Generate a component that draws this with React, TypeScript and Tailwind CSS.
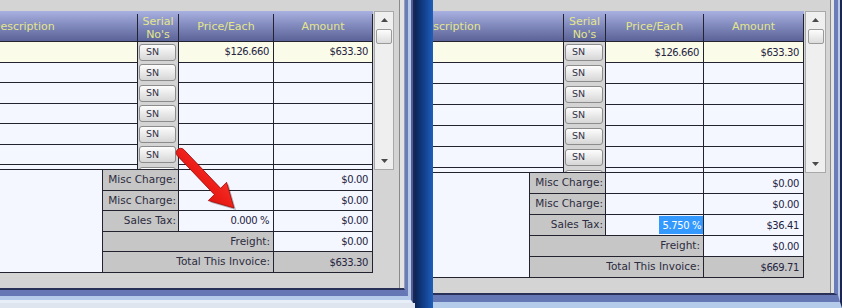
type Cfg = {
  box: string;
  desc: string;
  descShift: string;
  serial: string;
  btn: string;
  price: string;
  amount: string;
  row: string;
  totRow: string;
  blank: string;
  label: string;
  wide: string;
  scroll: string;
  taxAmt: string;
  total: string;
  tax: string;
  highlight: boolean;
};

const line = "border-[#23232f]";
const num = "text-[10px] tracking-[-0.4px] text-[#24243f]";

function SN({ cls, text = true }: { cls: string; text?: boolean }) {
  return (
    <div
      className={`${cls} ml-[1px] flex h-[17px] shrink-0 items-center rounded-[3px] border border-[#8c8c8c] bg-gradient-to-b from-[#fdfdfd] to-[#d6d6d6] pl-[6px] text-[9.5px] text-[#34344a]`}
    >
      {text ? "SN" : ""}
    </div>
  );
}

function ScrollBar({ cls }: { cls: string }) {
  return (
    <div className={`${cls} ml-[1px] flex flex-col items-center border border-[#a9a9a9] bg-[#efefef]`}>
      <svg width="7" height="4" className="mt-[6px]">
        <path d="M0 4 L3.5 0 L7 4Z" fill="#4a4a4a" />
      </svg>
      <div className="mt-[7px] h-[15px] w-[16px] rounded-[2px] border border-[#9a9a9a] bg-gradient-to-b from-[#fdfdfd] to-[#dcdcdc]" />
      <div className="flex-1" />
      <svg width="7" height="4" className="mb-[6px]">
        <path d="M0 0 L3.5 4 L7 0Z" fill="#4a4a4a" />
      </svg>
    </div>
  );
}

function Panel({ c }: { c: Cfg }) {
  const rows = [0, 1, 2, 3, 4, 5];
  return (
    <div className={`${c.box} flex flex-col overflow-hidden bg-[#d4d4d4] font-['DejaVu_Sans',sans-serif]`}>
      <div className="h-[11px] shrink-0" />
      <div className="flex items-start">
        <div className="flex flex-col">
          <div className={`flex h-[31px] border-b ${line} bg-gradient-to-b from-[#a9b1e1] to-[#5a6297] pt-[3px] text-[11px] text-[#e4e68c]`}>
            <div className={`${c.desc} flex items-center overflow-hidden border-r ${line}`}>
              <span className={`${c.descShift} whitespace-nowrap`}>Description</span>
            </div>
            <div className={`${c.serial} flex flex-col items-center justify-center border-r ${line} leading-[13px]`}>
              <span>Serial</span>
              <span>No's</span>
            </div>
            <div className={`${c.price} flex items-center justify-center border-r ${line}`}>Price/Each</div>
            <div className={`${c.amount} flex items-center justify-center border-r ${line}`}>Amount</div>
          </div>

          {rows.map((i) => {
            const bg = i === 0 ? "bg-[#fbfbea]" : "bg-[#f4f7ff]";
            return (
              <div key={i} className={`${c.row} flex`}>
                <div className={`${c.desc} border-r border-b ${line} ${bg}`} />
                <div className={`${c.serial} flex items-center border-r ${line}`}>
                  <SN cls={c.btn} />
                </div>
                <div className={`${c.price} flex items-center justify-end border-r border-b ${line} ${bg} pr-[4px] ${num}`}>
                  {i === 0 ? "$126.660" : ""}
                </div>
                <div className={`${c.amount} flex items-center justify-end border-r border-b ${line} ${bg} pr-[4px] ${num}`}>
                  {i === 0 ? "$633.30" : ""}
                </div>
              </div>
            );
          })}

          <div className="flex h-[5px]">
            <div className={`${c.desc} border-r border-b ${line} bg-[#f4f7ff]`} />
            <div className={`${c.serial} overflow-hidden border-r border-b ${line} pt-[2px]`}>
              <SN cls={c.btn} text={false} />
            </div>
            <div className={`${c.price} border-r border-b ${line} bg-[#f4f7ff]`} />
            <div className={`${c.amount} border-r border-b ${line} bg-[#f4f7ff]`} />
          </div>

          <div className="flex">
            <div className={`${c.blank} border-r border-b ${line} bg-[#f4f7ff]`} />
            <div className="flex flex-col text-[10.5px] text-[#2c2c40]">
              {["Misc Charge:", "Misc Charge:", "Sales Tax:"].map((t, i) => (
                <div key={i} className={`${c.totRow} flex`}>
                  <div className={`${c.label} flex items-center justify-end border-r border-b ${line} bg-[#c6c6c6] pr-[2px]`}>
                    {t}
                  </div>
                  <div className={`${c.price} flex items-center justify-end border-r border-b ${line} bg-[#f4f7ff] ${num} ${c.highlight && i === 2 ? "pr-0" : "pr-[4px]"}`}>
                    {i === 2 &&
                      (c.highlight ? (
                        <span className="flex h-[18px] items-center bg-[#3399ff] pr-[2px] pl-[3px] text-white">{c.tax}</span>
                      ) : (
                        c.tax
                      ))}
                  </div>
                  <div className={`${c.amount} flex items-center justify-end border-r border-b ${line} bg-[#f4f7ff] pr-[4px] ${num}`}>
                    {i === 2 ? c.taxAmt : "$0.00"}
                  </div>
                </div>
              ))}
              <div className={`${c.totRow} flex`}>
                <div className={`${c.wide} flex items-center justify-end border-r border-b ${line} bg-[#c6c6c6] pr-[3px]`}>
                  Freight:
                </div>
                <div className={`${c.amount} flex items-center justify-end border-r border-b ${line} bg-[#f4f7ff] pr-[4px] ${num}`}>
                  $0.00
                </div>
              </div>
              <div className={`${c.totRow} flex`}>
                <div className={`${c.wide} flex items-center justify-end border-r border-b ${line} bg-[#c6c6c6] pr-[3px]`}>
                  Total This Invoice:
                </div>
                <div className={`${c.amount} flex items-center justify-end border-r border-b ${line} bg-[#c6c6c6] pr-[4px] ${num}`}>
                  {c.total}
                </div>
              </div>
            </div>
          </div>
        </div>
        <ScrollBar cls={c.scroll} />
      </div>
    </div>
  );
}

const left: Cfg = {
  box: "w-[399px] h-[288px]",
  desc: "w-[138px]",
  descShift: "-ml-[8px]",
  serial: "w-[41px]",
  btn: "w-[37px]",
  price: "w-[95px]",
  amount: "w-[99px]",
  row: "h-[20.5px]",
  totRow: "h-[20.6px]",
  blank: "w-[103px]",
  label: "w-[76px]",
  wide: "w-[171px]",
  scroll: "w-[20px] h-[159px]",
  tax: "0.000 %",
  taxAmt: "$0.00",
  total: "$633.30",
  highlight: false,
};

const right: Cfg = {
  box: "w-[397px] h-[293px]",
  desc: "w-[131px]",
  descShift: "-ml-[15px]",
  serial: "w-[42px]",
  btn: "w-[38px]",
  price: "w-[98px]",
  amount: "w-[100px]",
  row: "h-[21px]",
  totRow: "h-[21px]",
  blank: "w-[97px]",
  label: "w-[76px]",
  wide: "w-[174px]",
  scroll: "w-[21px] h-[162px]",
  tax: "5.750 %",
  taxAmt: "$36.41",
  total: "$669.71",
  highlight: true,
};

// red call-out arrow drawn over the left window
function Arrow() {
  const d =
    "M183.8 149.6 L220.6 188.3 L226.6 182.3 L234 208 L208.3 200.6 L214.3 194.6 L177.5 155.9 A4.4 4.4 0 0 1 183.8 149.6 Z";
  return (
    <svg className="pointer-events-none absolute top-0 left-0" width="842" height="308">
      <defs>
        <linearGradient id="ar" x1="0" y1="1" x2="1" y2="0">
          <stop offset="0" stopColor="#b80808" />
          <stop offset="0.5" stopColor="#ee1e18" />
          <stop offset="1" stopColor="#ff5a4a" />
        </linearGradient>
      </defs>
      <path d={d} transform="translate(2 2)" fill="rgba(0,0,0,0.25)" />
      <path d={d} fill="url(#ar)" stroke="#a00606" strokeWidth="0.8" strokeLinejoin="round" />
    </svg>
  );
}

export default function App() {
  return (
    <div className="relative flex h-[308px] w-[842px] overflow-hidden bg-[#dfe5ee]">
      <div className="h-[303px] w-[415px] shrink-0 border-r-[2px] border-r-[#1b2550]">
        <div className="border-r-[2px] border-b-[3px] border-r-[#4b5d9a] border-b-[#e8eef7]">
          <div className="border-r-[3px] border-b-[4px] border-r-[#b7c9e7] border-b-[#b5cbea]">
            <div className="border-r-[3px] border-b-[6px] border-r-[#6b7db9] border-b-[#6577b5]">
              <div className="border-r border-b-[2px] border-r-[#9aa0b0] border-b-[#2a3158]">
                <div className="border-r-[4px] border-r-[#e3e3e3]">
                  <div className="border-r border-r-[#8a8a8a]">
                    <Panel c={left} />
                  </div>
                </div>
              </div>
            </div>
          </div>
        </div>
      </div>

      <div className="h-full w-[18px] shrink-0 bg-gradient-to-r from-[#0a2558] via-[#123f8c] to-[#1f5fb8]" />

      <div className="h-[308px] w-[409px] shrink-0 border-r-[2px] border-b-[6px] border-r-[#1b2550] border-b-[#b5cbea]">
        <div className="border-r-[2px] border-b-[7px] border-r-[#b7c9e7] border-b-[#6577b5]">
          <div className="border-r-[4px] border-b-[2px] border-r-[#6b7db9] border-b-[#2a3158]">
            <div className="border-r-[3px] border-r-[#e3e3e3]">
              <div className="border-r border-r-[#8a8a8a]">
                <Panel c={right} />
              </div>
            </div>
          </div>
        </div>
      </div>

      <Arrow />
    </div>
  );
}
